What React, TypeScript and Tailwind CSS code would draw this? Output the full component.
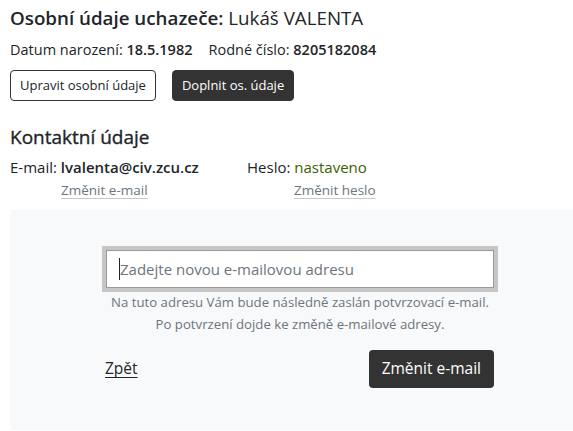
import React from 'react';

const App: React.FC = () => {
  return (
    <div className="min-h-screen bg-white text-[#212529] font-['Open_Sans',sans-serif]">
      <div className="px-[10px] pt-[4px]">
        <h1 className="text-[18.75px] leading-[28px]">
          <span className="font-semibold">Osobní údaje uchazeče:</span> Lukáš VALENTA
        </h1>
        <div className="mt-[6px] text-[14.5px] leading-[24px] flex gap-[16px]">
          <span>
            Datum narození: <span className="font-semibold">18.5.1982</span>
          </span>
          <span>
            Rodné číslo: <span className="font-semibold">8205182084</span>
          </span>
        </div>
        <div className="mt-[8px] flex gap-[16px] text-[13px]">
          <button className="h-[31px] px-[9px] border border-[#333] rounded-[4px] bg-white text-[#212529]">
            Upravit osobní údaje
          </button>
          <button className="h-[31px] px-[9px] border border-[#333] rounded-[4px] bg-[#333] text-white">
            Doplnit os. údaje
          </button>
        </div>

        <h2 className="mt-[22px] text-[19px] leading-[28px] [-webkit-text-stroke:0.35px_#212529]">
          Kontaktní údaje
        </h2>
        <div className="mt-[4px] flex text-[15px] leading-[24px]">
          <div className="w-[237px] flex flex-col">
            <span>
              E-mail: <span className="font-semibold">lvalenta@civ.zcu.cz</span>
            </span>
            <a className="mt-[1px] ml-[51px] text-[13.5px] leading-[20px] text-[#6c757d] underline decoration-[#c8c8c8] underline-offset-[3px] cursor-pointer">
              Změnit e-mail
            </a>
          </div>
          <div className="flex flex-col">
            <span>
              Heslo: <span className="text-[#3b6100]">nastaveno</span>
            </span>
            <a className="mt-[1px] ml-[47px] text-[13.5px] leading-[20px] text-[#6c757d] underline decoration-[#c8c8c8] underline-offset-[3px] cursor-pointer">
              Změnit heslo
            </a>
          </div>
        </div>
      </div>

      <div className="ml-[10px] mt-[10px] bg-[#f8f9fa] min-h-[220px] pt-[40px] pb-[40px]">
        <div className="ml-[92px] w-[396px] flex flex-col items-center">
          <div className="w-[388px] h-[38px] bg-white border border-[#999] shadow-[0_0_0_4px_#c6c6c6] flex items-center px-[12px] text-[15px] text-[#6c757d]">
            <span className="w-[1px] h-[22px] bg-[#212529]"></span>
            <span>Zadejte novou e-mailovou adresu</span>
          </div>
          <p className="mt-[3px] text-[13.2px] leading-[22px] text-[#6c757d] text-center">
            Na tuto adresu Vám bude následně zaslán potvrzovací e-mail.
            <br />
            Po potvrzení dojde ke změně e-mailové adresy.
          </p>
          <div className="mt-[15px] w-full flex items-center justify-between pl-[3px] pr-[4px]">
            <a className="text-[15.5px] underline underline-offset-[3px] cursor-pointer">Zpět</a>
            <button className="h-[38px] px-[13px] rounded-[4px] bg-[#333] text-white text-[15.5px]">
              Změnit e-mail
            </button>
          </div>
        </div>
      </div>
    </div>
  );
};

export default App;
